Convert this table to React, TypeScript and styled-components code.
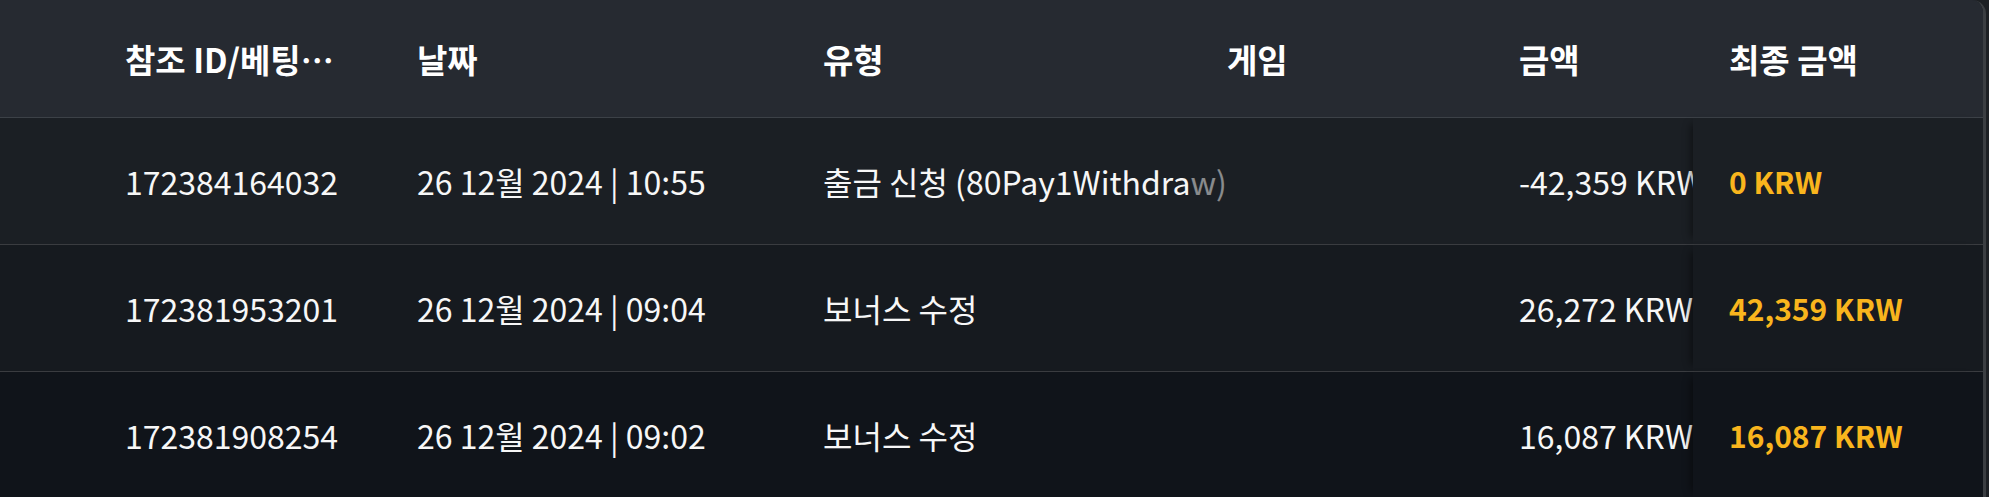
import React from 'react';
import styled, { createGlobalStyle } from 'styled-components';

const GlobalStyle = createGlobalStyle`
  html, body {
    margin: 0;
    padding: 0;
    background: #1d2024;
  }
  body {
    font-family: "Noto Sans CJK KR", "Noto Sans", sans-serif;
  }
`;

const Page = styled.div`
  width: 1989px;
  height: 497px;
  overflow: hidden;
  background: #1d2024;
`;

const Frame = styled.div`
  width: 1986px;
  height: 497px;
  box-sizing: border-box;
  border-right: 3px solid #3b3e42;
  border-top-right-radius: 14px;
  overflow: hidden;
  background: #0f1419;
`;

const COLUMNS = '87px 292px 406px 404px 292px 212px 290px';

const HeaderRow = styled.div`
  display: grid;
  grid-template-columns: ${COLUMNS};
  height: 117px;
  background: #262a31;
  border-bottom: 1px solid #3c4147;
`;

const HeaderCell = styled.div`
  display: flex;
  align-items: center;
  padding: 0 38px;
  min-width: 0;
  color: #ffffff;
  font-size: 33px;
  font-weight: 700;
  white-space: nowrap;
  overflow: hidden;

  span {
    overflow: hidden;
    text-overflow: ellipsis;
  }
`;

const BodyRow = styled.div<{ $bg: string }>`
  display: grid;
  grid-template-columns: ${COLUMNS};
  height: 126px;
  background: ${(p) => p.$bg};
  border-bottom: 1px solid #3a3c40;
`;

const Cell = styled.div`
  display: flex;
  align-items: center;
  padding: 0 38px;
  min-width: 0;
  color: #f7f7f7;
  font-size: 32px;
  font-weight: 400;
  white-space: nowrap;
`;

const GameCell = styled(Cell)<{ $bg: string }>`
  background: ${(p) => p.$bg}80;
`;

const FinalCell = styled(Cell)<{ $bg: string }>`
  padding: 0 36px;
  background: ${(p) => p.$bg};
  box-shadow: -8px 0 8px -6px rgba(0, 0, 0, 0.45);
  color: #f9b51d;
  font-size: 30px;
  font-weight: 700;
`;

const HeaderFinal = styled(HeaderCell)`
  padding: 0 36px;
  background: #262a31;
`;

interface Tx {
  id: string;
  date: string;
  type: string;
  game: string;
  amount: string;
  final: string;
  bg: string;
}

const rows: Tx[] = [
  {
    id: '172384164032',
    date: '26 12월 2024 | 10:55',
    type: '출금 신청 (80Pay1Withdraw)',
    game: '',
    amount: '-42,359 KRW',
    final: '0 KRW',
    bg: '#1b1f24',
  },
  {
    id: '172381953201',
    date: '26 12월 2024 | 09:04',
    type: '보너스 수정',
    game: '',
    amount: '26,272 KRW',
    final: '42,359 KRW',
    bg: '#161a1f',
  },
  {
    id: '172381908254',
    date: '26 12월 2024 | 09:02',
    type: '보너스 수정',
    game: '',
    amount: '16,087 KRW',
    final: '16,087 KRW',
    bg: '#10141a',
  },
];

const App: React.FC = () => {
  return (
    <Page>
      <GlobalStyle />
      <Frame>
        <HeaderRow>
          <div />
          <HeaderCell>
            <span>참조 ID/베팅 ID</span>
          </HeaderCell>
          <HeaderCell>
            <span>날짜</span>
          </HeaderCell>
          <HeaderCell>
            <span>유형</span>
          </HeaderCell>
          <HeaderCell>
            <span>게임</span>
          </HeaderCell>
          <HeaderCell>
            <span>금액</span>
          </HeaderCell>
          <HeaderFinal>
            <span>최종 금액</span>
          </HeaderFinal>
        </HeaderRow>
        {rows.map((r) => (
          <BodyRow key={r.id} $bg={r.bg}>
            <div />
            <Cell>{r.id}</Cell>
            <Cell>{r.date}</Cell>
            <Cell>{r.type}</Cell>
            <GameCell $bg={r.bg}>{r.game}</GameCell>
            <Cell>{r.amount}</Cell>
            <FinalCell $bg={r.bg}>{r.final}</FinalCell>
          </BodyRow>
        ))}
      </Frame>
    </Page>
  );
};

export default App;
